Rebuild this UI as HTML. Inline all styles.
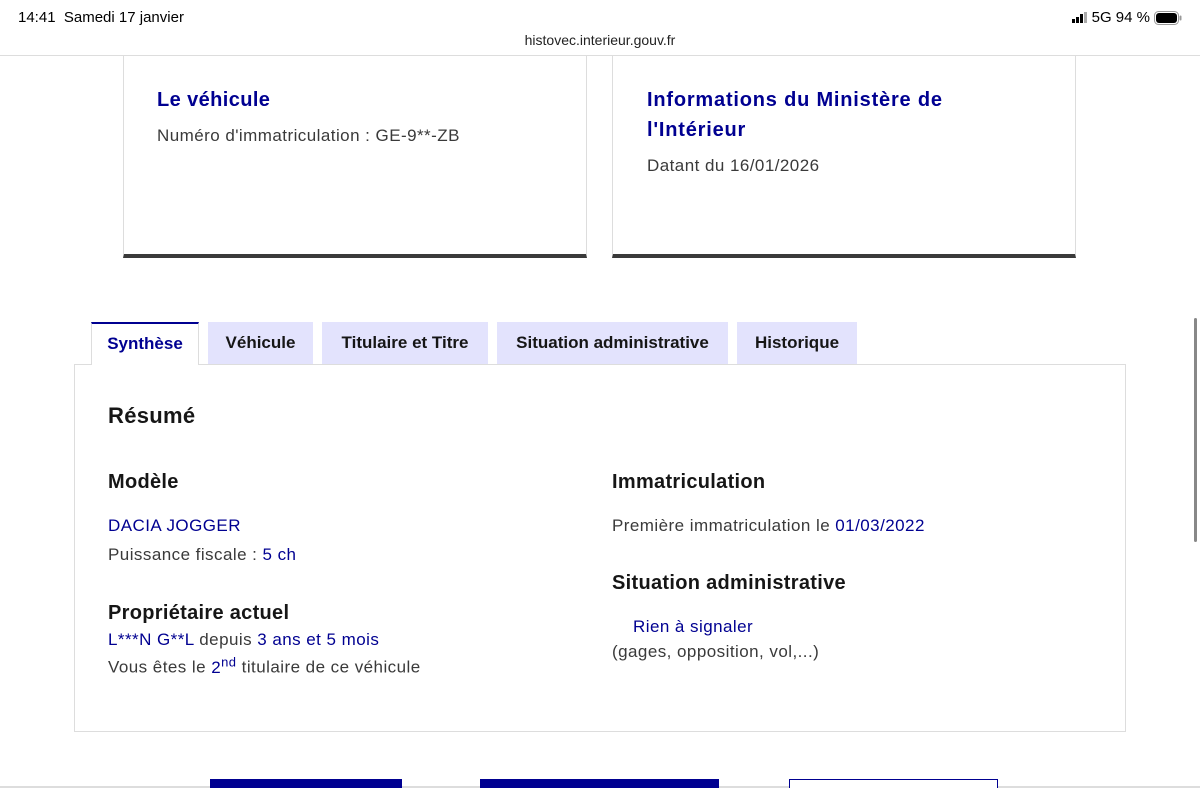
<!DOCTYPE html><html><head><meta charset="utf-8"><style>
*{margin:0;padding:0;box-sizing:border-box}
body{width:1200px;height:788px;overflow:hidden;background:#fff;font-family:"Liberation Sans",sans-serif;color:#3a3a3a;position:relative}
.a{position:absolute;white-space:nowrap}
.t{font-size:17px;letter-spacing:0.45px}
.blue{color:#000091}
.h{color:#161616;font-weight:bold;letter-spacing:0.3px}
.tab{position:absolute;top:322px;height:42px;background:#e3e3fd;color:#161616;font-weight:bold;font-size:17px;text-align:center;line-height:42px}
</style></head><body>
<div class="a" style="left:18px;top:9px;font-size:15px;color:#000">14:41&nbsp; Samedi 17 janvier</div>
<div class="a" style="right:18px;top:9px;font-size:15px;color:#000;display:flex;align-items:center;gap:4px">
<svg width="16" height="11"><rect x="0" y="7" width="3" height="4" fill="#000"/><rect x="4" y="5" width="3" height="6" fill="#000"/><rect x="8" y="2" width="3" height="9" fill="#000"/><rect x="12" y="0" width="3" height="11" fill="#aaa"/></svg>
<span>5G 94 %</span>
<svg width="28" height="14"><rect x="0.5" y="0.5" width="24" height="13" rx="4" fill="none" stroke="#999"/><rect x="2" y="2" width="21" height="10" rx="3" fill="#000"/><rect x="25.5" y="4.5" width="2" height="5" rx="1" fill="#999"/></svg></div>
<div class="a" style="left:0;width:1200px;text-align:center;top:32px;font-size:14px;color:#222">histovec.interieur.gouv.fr</div>
<div class="a" style="left:0;top:55px;width:1200px;height:1px;background:#ddd"></div>

<div class="a" style="left:123px;top:56px;width:464px;height:202px;border:1px solid #ddd;border-top:none;border-bottom:4px solid #3a3a3a"></div>
<div class="a blue" style="left:157px;top:89px;font-size:20px;font-weight:bold;letter-spacing:0.4px">Le véhicule</div>
<div class="a t" style="left:157px;top:126px">Numéro d'immatriculation : GE-9**-ZB</div>

<div class="a" style="left:612px;top:56px;width:464px;height:202px;border:1px solid #ddd;border-top:none;border-bottom:4px solid #3a3a3a"></div>
<div class="a blue" style="left:647px;top:85px;font-size:20px;font-weight:bold;line-height:30px;letter-spacing:0.8px">Informations du Ministère de<br>l'Intérieur</div>
<div class="a t" style="left:647px;top:156px">Datant du 16/01/2026</div>

<div class="a" style="left:74px;top:364px;width:1052px;height:368px;border:1px solid #ddd"></div>
<div class="tab" style="left:91px;width:108px;background:#fff;color:#000091;border-top:2px solid #000091;border-left:1px solid #ddd;border-right:1px solid #ddd;height:43px;line-height:40px">Synthèse</div>
<div class="tab" style="left:208px;width:105px">Véhicule</div>
<div class="tab" style="left:322px;width:166px">Titulaire et Titre</div>
<div class="tab" style="left:497px;width:231px">Situation administrative</div>
<div class="tab" style="left:737px;width:120px">Historique</div>

<div class="a h" style="left:108px;top:403px;font-size:22px">Résumé</div>
<div class="a h" style="left:108px;top:471px;font-size:20px">Modèle</div>
<div class="a blue t" style="left:108px;top:516px">DACIA JOGGER</div>
<div class="a t" style="left:108px;top:545px">Puissance fiscale : <span class="blue">5 ch</span></div>
<div class="a h" style="left:108px;top:602px;font-size:20px">Propriétaire actuel</div>
<div class="a t" style="left:108px;top:630px"><span class="blue">L***N G**L</span> depuis <span class="blue">3 ans et 5 mois</span></div>
<div class="a t" style="left:108px;top:654px">Vous êtes le <span class="blue">2<sup style="font-size:13px">nd</sup></span> titulaire de ce véhicule</div>

<div class="a h" style="left:612px;top:471px;font-size:20px">Immatriculation</div>
<div class="a t" style="left:612px;top:516px">Première immatriculation le <span class="blue">01/03/2022</span></div>
<div class="a h" style="left:612px;top:572px;font-size:20px">Situation administrative</div>
<div class="a blue t" style="left:633px;top:617px">Rien à signaler</div>
<div class="a t" style="left:612px;top:642px">(gages, opposition, vol,...)</div>

<div class="a" style="left:0;top:786px;width:1200px;height:2px;background:#ddd"></div>
<div class="a" style="left:210px;top:779px;width:192px;height:9px;background:#000091"></div>
<div class="a" style="left:480px;top:779px;width:239px;height:9px;background:#000091"></div>
<div class="a" style="left:789px;top:779px;width:209px;height:9px;border:1px solid #000091;border-bottom:none;background:#fff"></div>
<div class="a" style="left:1194px;top:318px;width:3px;height:224px;border-radius:2px;background:#888"></div>
</body></html>
